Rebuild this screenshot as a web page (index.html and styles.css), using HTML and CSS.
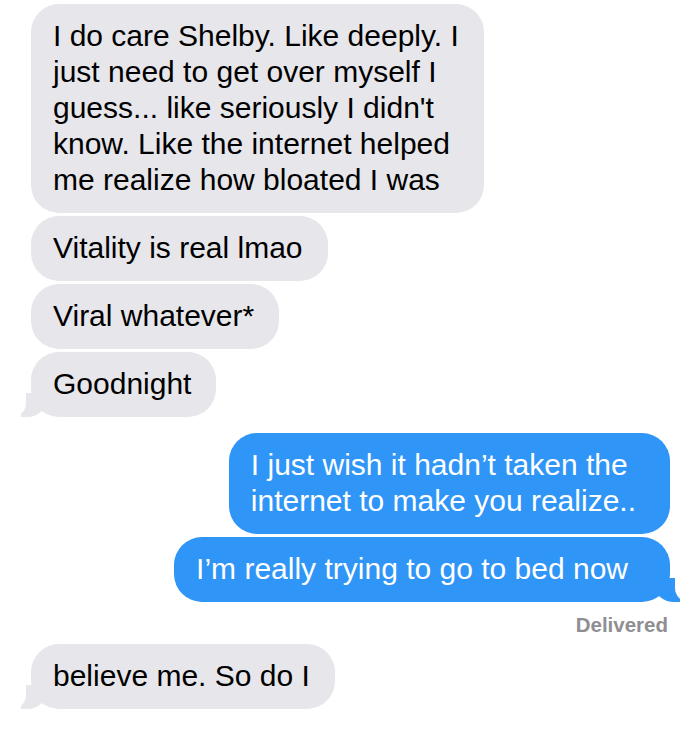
FILE: index.html
```html
<!DOCTYPE html>
<html lang="en">
<head>
    <meta charset="UTF-8">
    <meta name="viewport" content="width=device-width, initial-scale=1.0">
    <title>Messages</title>
    <link rel="stylesheet" href="styles.css">
</head>
<body>

<div class="thread">
    <div class="msg in">I do care Shelby. Like deeply. I<br>just need to get over myself I<br>guess... like seriously I didn't<br>know. Like the internet helped<br>me realize how bloated I was</div>
    <div class="msg in">Vitality is real lmao</div>
    <div class="msg in">Viral whatever*</div>
    <div class="msg in tail">Goodnight</div>

    <div class="msg out group-start">I just wish it hadn’t taken the<br>internet to make you realize..</div>
    <div class="msg out tail">I’m really trying to go to bed now</div>
    <div class="status">Delivered</div>

    <div class="msg in tail">believe me. So do I</div>
</div>

</body>
</html>
```

FILE: styles.css
```css
body {
    font-family: "Liberation Sans", Arial, sans-serif;
    background-color: #fff;
    margin: 0;
}
.thread {
    display: flex;
    flex-direction: column;
    gap: 3px;
    padding: 4px 30px 0 31px;
}
.msg {
    position: relative;
    max-width: 470px;
    padding: 14px 25px 15px 22px;
    border-radius: 28px;
    font-size: 30px;
    line-height: 36px;
}
.in {
    align-self: flex-start;
    background: #e6e6eb;
    color: #000;
}
.out {
    align-self: flex-end;
    background: #2f95f7;
    color: #fff;
    padding-right: 34px;
}
.out.tail {
    padding-right: 42px;
}
.group-start {
    margin-top: 13px;
}
.status {
    align-self: flex-end;
    margin: 8px 2px 4px 0;
    font-size: 20.5px;
    font-weight: bold;
    line-height: 24px;
    color: #8e8e93;
}

/* bubble tails */
.tail::before,
.tail::after {
    content: "";
    position: absolute;
    bottom: 0;
    height: 24px;
}
.in.tail::before {
    left: -10px;
    width: 26px;
    background: #e6e6eb;
    border-bottom-right-radius: 20px 18px;
}
.in.tail::after {
    left: -22px;
    width: 17px;
    background: #fff;
    border-bottom-right-radius: 14px;
}
.out.tail::before {
    right: -10px;
    width: 26px;
    background: #2f95f7;
    border-bottom-left-radius: 20px 18px;
}
.out.tail::after {
    right: -22px;
    width: 17px;
    background: #fff;
    border-bottom-left-radius: 14px;
}
```
